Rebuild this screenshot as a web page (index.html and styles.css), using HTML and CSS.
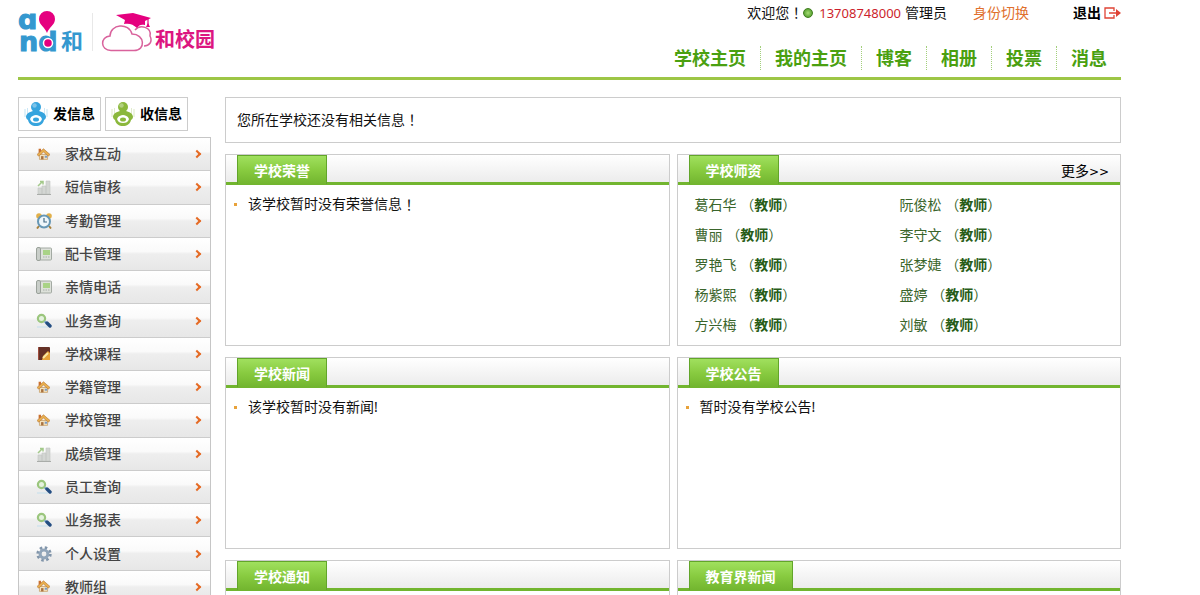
FILE: index.html
```html
<!DOCTYPE html>
<html lang="zh-CN">
<head>
<meta charset="utf-8">
<title>和校园</title>
<link rel="stylesheet" href="styles.css">
</head>
<body>
<svg class="sprite" aria-hidden="true">
  <symbol id="i-home" viewBox="0 0 16 16"><path d="M3 8h10v6H3z" fill="#f5e3bd" stroke="#c9a26e"/><path d="M0 8 8 1l8 7-2 2-6-5-6 5z" fill="#e9b04f" stroke="#b87a3c" stroke-width=".8"/><path d="M2 1h3v3L2 6z" fill="#c9702f"/><path d="M5 10h3v4H5z" fill="#a8713f"/><path d="M9.500 9.500h3v2.500h-3z" fill="#7c9cc4"/></symbol>
  <symbol id="i-chart" viewBox="0 0 16 16"><path d="M2 9h4v6H2zM6 7h4v8H6zM10 2h4v13h-4z" fill="#d3d6d3" stroke="#c3c6c3" stroke-width=".6"/><path d="M1 15.500h14" stroke="#a9aca9"/><path d="m2 7 4-4M4 2.500h3v3" fill="none" stroke="#a3c98a" stroke-width="1.500"/></symbol>
  <symbol id="i-clock" viewBox="0 0 16 16"><path d="m3 13-2 2.500M13 13l2 2.500" stroke="#a8813c" stroke-width="2"/><circle cx="3" cy="3" r="2.800" fill="#e2b04a"/><circle cx="13" cy="3" r="2.800" fill="#e2b04a"/><circle cx="8" cy="8.500" r="6" fill="#eef6fb" stroke="#6697b5" stroke-width="2"/><path d="M8 5v4h3" fill="none" stroke="#456b85" stroke-width="1.200"/></symbol>
  <symbol id="i-phone" viewBox="0 0 16 16"><rect x="3" y="2" width="12.500" height="12" rx="1" fill="#dde1da" stroke="#a3aaa3"/><rect x=".5" y="1.500" width="4" height="13" rx="1.500" fill="#c9cec9" stroke="#9aa19a"/><path d="M7 4h7v5H7z" fill="#a9d386"/><path d="M7 11h7" stroke="#a9b0a9" stroke-dasharray="1.500 1"/></symbol>
  <symbol id="i-search" viewBox="0 0 16 16"><path d="M1 14h11" stroke="#d7e5ec" stroke-width="2"/><circle cx="5.500" cy="5.500" r="3.600" fill="#e5f2df" stroke="#9bc67d" stroke-width="2.200"/><path d="m8.500 8.500 2 1.500" stroke="#79a8cd" stroke-width="2"/><path d="m11 10 3 3" stroke="#234d82" stroke-width="3.400" stroke-linecap="round"/></symbol>
  <symbol id="i-book" viewBox="0 0 16 16"><rect x="2" y="1" width="12" height="13" rx="1" fill="#653126"/><path d="M2.500 1.500v12" stroke="#a04d3e"/><path d="m6 14 1-4 5-5 2 2v7z" fill="#e8a238"/><path d="m7 12 5-5" stroke="#fbe9a7" stroke-width="1.800"/></symbol>
  <symbol id="i-gear" viewBox="0 0 16 16"><circle cx="8" cy="8" r="6.300" fill="none" stroke="#8195aa" stroke-width="2.800" stroke-dasharray="2.474 2.474"/><circle cx="8" cy="8" r="3.900" fill="none" stroke="#91a5b9" stroke-width="3"/></symbol>
  <symbol id="i-person" viewBox="0 0 24 26"><path d="M1 8v8M23 8v8" stroke="currentColor" stroke-width="2" opacity=".15"/><path d="M3.500 7v6M20.500 7v6" stroke="currentColor" opacity=".25"/><circle cx="12" cy="6" r="5" fill="currentColor"/><path d="M9 10c-4 1-7 3-7 6 0 2 2 3 2 3 1 4 4 6 8 6s7-2 8-6c0 0 2-1 2-3 0-3-3-5-7-6z" fill="currentColor"/><circle cx="10.500" cy="4.500" r="2.200" fill="#fff" opacity=".35"/><path d="M6 18c1-3 4-4 6-4s5 1 6 4c-1 3-3 4-6 4s-5-1-6-4z" fill="#fff"/><ellipse cx="12" cy="18.500" rx="3" ry="2" fill="currentColor"/></symbol>
</svg>
<div class="page">
  <header class="header">
    <svg class="logo" viewBox="0 0 200 52" role="img" aria-label="和校园">
      <g class="logo-latin"><text x="0" y="21">ɑ</text><text x="1" y="43">nd</text></g>
      <path d="M29 25c-2-6-8-8-8-14a8 8 0 0 1 16 0c0 6-6 8-8 14z" fill="#e5007f"/>
      <circle cx="30" cy="35" r="4.500" fill="#e5007f" stroke="#fff" stroke-width="1.500"/>
      <text class="logo-he" x="43" y="41">和</text>
      <path d="M74.500 5v38" stroke="#e8e8e8"/>
      <path d="M117 22c5-6 17-3 15 6 3 6-1 10-6 10" fill="none" stroke="#d9629c" stroke-width="1.500"/>
      <path d="M93 42.500c-11 0-11-14-1-14.500 0-12 19-14 22-2 13 0 14 16.500 2 16.500z" fill="#fff" stroke="#d9629c" stroke-width="1.500"/>
      <path d="m98 7 17-2 18 5-6 3v4c-4-1-6 0-8 3-4-4-8-5-13-4l1-4z" fill="#e5007f"/><path d="M130 10v7" stroke="#e5007f" stroke-width="1.200"/><path d="m130 15-2 4h4z" fill="#e5007f"/>
      <text class="logo-name" x="137" y="39">和校园</text>
    </svg>
    <div class="header-side">
      <div class="account">
        <span>欢迎您<span class="mark">！</span></span><span class="online"></span><span class="phone">13708748000</span><span>管理员</span>
        <a class="switch" href="#">身份切换</a>
        <a class="logout" href="#">退出<svg viewBox="0 0 17 12" width="17" height="12" aria-hidden="true"><path d="M10 4V1H1v10h9V8M5 6h9" fill="none" stroke="#df4335" stroke-width="1.300"/><path d="m12 2 5 4-5 4z" fill="#df4335"/></svg></a>
      </div>
      <nav class="nav"><a href="#">学校主页</a><a href="#">我的主页</a><a href="#">博客</a><a href="#">相册</a><a href="#">投票</a><a href="#">消息</a></nav>
    </div>
  </header>
  <div class="body">
    <aside class="sidebar">
      <div class="actions">
        <button type="button"><svg class="send"><use href="#i-person"/></svg>发信息</button>
        <button type="button"><svg class="receive"><use href="#i-person"/></svg>收信息</button>
      </div>
      <nav class="menu">
        <a href="#"><svg class="small"><use href="#i-home"/></svg>家校互动</a>
        <a href="#"><svg><use href="#i-chart"/></svg>短信审核</a>
        <a href="#"><svg><use href="#i-clock"/></svg>考勤管理</a>
        <a href="#"><svg><use href="#i-phone"/></svg>配卡管理</a>
        <a href="#"><svg><use href="#i-phone"/></svg>亲情电话</a>
        <a href="#"><svg><use href="#i-search"/></svg>业务查询</a>
        <a href="#"><svg><use href="#i-book"/></svg>学校课程</a>
        <a href="#"><svg class="small"><use href="#i-home"/></svg>学籍管理</a>
        <a href="#"><svg class="small"><use href="#i-home"/></svg>学校管理</a>
        <a href="#"><svg><use href="#i-chart"/></svg>成绩管理</a>
        <a href="#"><svg><use href="#i-search"/></svg>员工查询</a>
        <a href="#"><svg><use href="#i-search"/></svg>业务报表</a>
        <a href="#"><svg><use href="#i-gear"/></svg>个人设置</a>
        <a href="#"><svg class="small"><use href="#i-home"/></svg>教师组</a>
      </nav>
    </aside>
    <main class="main">
      <p class="notice">您所在学校还没有相关信息<span class="mark">！</span></p>
      <div class="panels">
        <section class="panel"><header><h2>学校荣誉</h2></header><ul class="list"><li>该学校暂时没有荣誉信息<span class="mark">！</span></li></ul></section>
        <section class="panel"><header><h2>学校师资</h2><a class="more" href="#">更多<span>&gt;&gt;</span></a></header>
          <ul class="teachers">
            <li><a href="#">葛石华 <i>（</i><b>教师</b><i>）</i></a></li><li><a href="#">阮俊松 <i>（</i><b>教师</b><i>）</i></a></li>
            <li><a href="#">曹丽 <i>（</i><b>教师</b><i>）</i></a></li><li><a href="#">李守文 <i>（</i><b>教师</b><i>）</i></a></li>
            <li><a href="#">罗艳飞 <i>（</i><b>教师</b><i>）</i></a></li><li><a href="#">张梦婕 <i>（</i><b>教师</b><i>）</i></a></li>
            <li><a href="#">杨紫熙 <i>（</i><b>教师</b><i>）</i></a></li><li><a href="#">盛婷 <i>（</i><b>教师</b><i>）</i></a></li>
            <li><a href="#">方兴梅 <i>（</i><b>教师</b><i>）</i></a></li><li><a href="#">刘敏 <i>（</i><b>教师</b><i>）</i></a></li>
          </ul>
        </section>
        <section class="panel"><header><h2>学校新闻</h2></header><ul class="list"><li>该学校暂时没有新闻!</li></ul></section>
        <section class="panel"><header><h2>学校公告</h2></header><ul class="list"><li>暂时没有学校公告!</li></ul></section>
        <section class="panel"><header><h2>学校通知</h2></header></section>
        <section class="panel"><header><h2>教育界新闻</h2></header></section>
      </div>
    </main>
  </div>
</div>
</body>
</html>
```
FILE: styles.css
```css
* { box-sizing: border-box; }
body, p, ul, h2 { margin: 0; padding: 0; }
ul { list-style: none; }
a { color: inherit; text-decoration: none; }
body, button { font: 14px/20px "Noto Sans", "Noto Sans CJK SC", sans-serif; color: #111; }
body { background: #fff; }
.sprite { position: absolute; width: 0; height: 0; }
.mark, .teachers i { display: inline-block; font-family: "Noto Sans CJK TC", sans-serif; font-style: normal; font-feature-settings: "locl" 0; line-height: 1; }
.page { padding: 0 79px 0 18px; height: 100vh; overflow: hidden; }

.header { display: flex; justify-content: space-between; height: 80px; border-bottom: 3px solid #9dc646; }
.logo { width: 200px; height: 52px; margin-top: 8px; overflow: visible; }
.logo text { font-family: "Noto Sans CJK SC", sans-serif; font-weight: bold; }
.logo .logo-latin text { font-family: "DejaVu Sans", sans-serif; font-size: 27px; fill: #3498cf; stroke: #3498cf; }
.logo .logo-he { font-size: 22px; fill: #3498cf; }
.logo .logo-name { font-size: 20px; fill: #dc1680; }
.header-side { display: flex; flex-direction: column; align-items: flex-end; }
.account { display: flex; align-items: center; height: 26px; }
.online { width: 10px; height: 10px; border-radius: 50%; border: 1px solid #3f7d1e; background: radial-gradient(#a6dc74, #3f8f1c); }
.phone { margin: 0 4px 0 6px; font-size: 13px; color: #cc1f2c; }
.switch { margin-left: 26px; color: #e0702e; }
.logout { display: flex; align-items: center; gap: 3px; margin-left: 44px; font-weight: bold; color: #000; }
.nav { display: flex; margin-top: 20px; }
.nav a { padding: 0 14px; font-size: 18px; line-height: 24px; font-weight: bold; color: #4aa010; }
.nav a + a { border-left: 1px dotted #a3cf7c; }

.body { display: flex; gap: 14px; margin-top: 17px; }
.sidebar { flex: 0 0 193px; }
.actions { display: flex; gap: 4px; }
.actions button { display: flex; align-items: center; gap: 5px; width: 83px; height: 34px; padding: 0 4px 0 5px; border: 1px solid #ccc; background: #fff; font-weight: bold; color: #000; white-space: nowrap; }
.actions svg { flex: none; width: 24px; height: 26px; }
.send { color: #36a4de; }
.receive { color: #8bb83c; }
.menu { display: grid; grid-auto-rows: 1fr; min-height: 468px; margin-top: 6px; border: 1px solid #c6c6c6; }
.menu a { display: flex; align-items: center; padding: 0 7px 0 17px; border-bottom: 1px solid #ccc; background: linear-gradient(#fff 0%, #fafafa 42%, #eee 50%, #e7e7e7 100%); font-weight: 500; color: #444; }
.menu svg { width: 16px; height: 16px; margin-right: 13px; }
.menu .small { width: 13px; height: 13px; margin: 0 15px 0 1px; }
.menu a::after { content: ""; width: 6px; height: 6px; margin-left: auto; margin-right: 3px; border: solid #e56a24; border-width: 2px 2px 0 0; transform: rotate(45deg); box-sizing: border-box; }

.main { flex: 1; min-width: 0; }
.notice { padding: 12px 11px; border: 1px solid #ccc; }
.panels { display: grid; grid-template-columns: 1fr 1fr; grid-auto-rows: 192px; gap: 11px 7px; margin-top: 11px; }
.panel { border: 1px solid #ccc; }
.panel header { display: flex; justify-content: space-between; height: 30px; padding: 0 11px; border-bottom: 3px solid #72b52f; background: linear-gradient(#fff, #ececec); }
.panel h2 { height: 29px; padding: 5px 16px 3px; border: 1px solid #62a52a; border-bottom: 0; background: linear-gradient(#a0e05e, #88cb40 50%, #72b52f); font-size: 14px; line-height: 20px; color: #fff; }
.more { padding-top: 6px; color: #000; }
.more span { font: 12px/1 "DejaVu Sans", sans-serif; }
.list { padding: 9px 8px; }
.list li { display: flex; align-items: center; }
.list li::before { content: ""; width: 3px; height: 3px; margin-right: 11px; background: #e8a23a; }
.teachers { display: grid; grid-template-columns: 205px 1fr; padding: 5px 17px; line-height: 30px; color: #3a652b; }
.teachers b { color: #275c17; }
```
